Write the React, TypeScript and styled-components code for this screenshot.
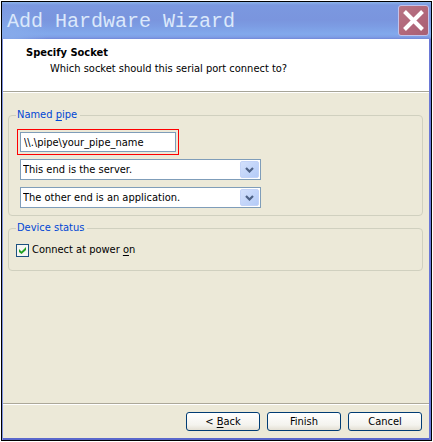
import React from "react";
import styled, { createGlobalStyle } from "styled-components";

const GlobalStyle = createGlobalStyle`
  *, *::before, *::after { box-sizing: border-box; }
  body { margin: 0; background: #fff; }
  body, button, input, select {
    font-family: "DejaVu Sans Condensed", "Noto Sans", sans-serif;
    font-size: 11px;
    line-height: 14px;
    color: #000;
  }
`;

const Page = styled.div`
  display: flex;
  min-height: 100vh;
  padding: 1px;
`;

const Dialog = styled.main`
  flex: 1;
  display: flex;
  flex-direction: column;
  background: #ece9d8;
  border: 1px solid #000;
  box-shadow: inset 1px 0 #7f93e0, inset -2px 0 #6a78d6, inset 0 -2px #5a68cc;
  padding: 0 2px 2px 1px;
`;

const TitleBar = styled.header`
  display: flex;
  align-items: center;
  justify-content: space-between;
  height: 37px;
  padding: 0 2px 0 5px;
  margin: 0 -2px 0 -1px;
  background:
    radial-gradient(ellipse 36px 30px at 10px 32px, #86aaea 0%, transparent 100%),
    linear-gradient(#8cb4ea 0, #7b98e0 3px, #7a95de 18px, #7c9ce3 24px, #82a9ec 32px, #7f9fe6 35px, #7288d8 37px);
`;

const Title = styled.h1`
  margin: 0;
  padding-top: 2px;
  font: 20px/28px "Liberation Mono", monospace;
  color: #dbe8fb;
  white-space: pre;
`;

const CloseButton = styled.button`
  display: grid;
  place-items: center;
  width: 31px;
  height: 31px;
  padding: 0;
  border: 1px solid #c3c2ea;
  border-radius: 3px;
  background: linear-gradient(135deg, #b87584, #b1667a 60%, #a65f74);
`;

const Banner = styled.section`
  height: 54px;
  padding: 6px 23px 0;
  background: #fff;
  border-bottom: 1px solid #fff;
  box-shadow: inset 0 -1px #a6a498;
`;

const Heading = styled.h2`
  margin: 0;
  font-size: 11px;
  line-height: 16px;
`;

const Subheading = styled.p`
  margin: 0 0 0 24px;
  line-height: 16px;
`;

const Content = styled.div`
  flex: 1;
  display: flex;
  flex-direction: column;
  gap: 5px;
  padding: 15px 6px 15px 5px;
`;

const Group = styled.fieldset`
  display: flex;
  flex-direction: column;
  align-items: flex-start;
  min-width: 0;
  margin: 0;
  padding: 8px 7px 7px;
  border: 1px solid #d0d0bf;
  border-radius: 4px;
`;

const Legend = styled.legend`
  padding: 0 3px 0 1px;
  color: #0046d5;
`;

const Key = styled.span`
  text-decoration: underline;
  text-underline-offset: 2px;
`;

const Fields = styled.div`
  display: flex;
  flex-direction: column;
  align-items: flex-start;
  gap: 7px;
  padding: 2px 0 0 4px;
`;

const PipeInput = styled.input`
  width: 156px;
  height: 20px;
  padding: 0 3px;
  border: 1px solid #7f9db9;
  border-radius: 0;
  background: #fff;
  outline: 1px solid #f00;
  outline-offset: 2px;
`;

const SelectBox = styled.div`
  position: relative;
  width: 241px;
  max-width: 100%;
`;

const Select = styled.select`
  display: block;
  appearance: none;
  width: 100%;
  height: 21px;
  padding: 0 22px 0 2px;
  border: 1px solid #7f9db9;
  border-radius: 0;
  background: #fff;
`;

const Arrow = styled.span`
  position: absolute;
  top: 2px;
  right: 2px;
  display: grid;
  place-items: center;
  width: 19px;
  height: 17px;
  border-radius: 2px;
  border: 1px solid #c3d3f8;
  background: linear-gradient(135deg, #d3e0fc, #b4cbf7);
  pointer-events: none;
`;

const CheckLabel = styled.label`
  display: flex;
  align-items: center;
  gap: 3px;
  padding: 0 0 6px;
`;

const Checkbox = styled.input`
  appearance: none;
  width: 13px;
  height: 13px;
  margin: 0;
  border: 1px solid #1c5180;
  background: #f6f6f2;
`;

const CheckStack = styled.span`
  display: grid;
  place-items: center;
  & > * { grid-area: 1 / 1; }
  & > svg { pointer-events: none; visibility: hidden; }
  & > input:checked + svg { visibility: visible; }
`;

const Footer = styled.footer`
  display: flex;
  justify-content: flex-end;
  gap: 7px;
  padding: 8px 7px 7px;
  border-top: 1px solid #aca899;
  box-shadow: inset 0 1px #fff;
`;

const PushButton = styled.button`
  width: 74px;
  height: 19px;
  padding: 0;
  border: 1px solid #003c74;
  border-radius: 3px;
  background: linear-gradient(#fff, #f4f3ee 70%, #e4e0d4);
`;

function DropDown({ label, options }: { label: string; options: string[] }) {
  return (
    <SelectBox>
      <Select aria-label={label}>
        {options.map((option) => (
          <option key={option}>{option}</option>
        ))}
      </Select>
      <Arrow>
        <svg width="9" height="6" viewBox="0 0 9 6" aria-hidden="true">
          <path d="M1 1 L4.5 4.5 L8 1" fill="none" stroke="#4d6185" strokeWidth="2.2" />
        </svg>
      </Arrow>
    </SelectBox>
  );
}

export default function App() {
  return (
    <>
      <GlobalStyle />
      <Page>
        <Dialog>
          <TitleBar>
            <Title>Add Hardware Wizard</Title>
            <CloseButton type="button" aria-label="Close">
              <svg width="21" height="21" viewBox="0 0 21 21" aria-hidden="true">
                <path d="M1.5 1.5 L19.5 19.5 M19.5 1.5 L1.5 19.5" stroke="#fff" strokeWidth="4" />
              </svg>
            </CloseButton>
          </TitleBar>
          <Banner>
            <Heading>Specify Socket</Heading>
            <Subheading>Which socket should this serial port connect to?</Subheading>
          </Banner>
          <Content>
            <Group>
              <Legend>
                <label htmlFor="pipe">
                  Named <Key>p</Key>ipe
                </label>
              </Legend>
              <Fields>
                <PipeInput id="pipe" type="text" defaultValue={"\\\\.\\pipe\\your_pipe_name"} />
                <DropDown
                  label="This end"
                  options={["This end is the server.", "This end is the client."]}
                />
                <DropDown
                  label="Other end"
                  options={["The other end is an application.", "The other end is a virtual machine."]}
                />
              </Fields>
            </Group>
            <Group>
              <Legend>Device status</Legend>
              <CheckLabel>
                <CheckStack>
                  <Checkbox type="checkbox" defaultChecked />
                  <svg width="7" height="7" viewBox="0 0 7 7" aria-hidden="true">
                    <path d="M0 2 L2.5 4.5 L7 0 V3 L2.5 7 L0 5 Z" fill="#21a121" />
                  </svg>
                </CheckStack>
                <span>
                  Connect at power <Key>o</Key>n
                </span>
              </CheckLabel>
            </Group>
          </Content>
          <Footer>
            <PushButton type="button">
              &lt; <Key>B</Key>ack
            </PushButton>
            <PushButton type="button">Finish</PushButton>
            <PushButton type="button">Cancel</PushButton>
          </Footer>
        </Dialog>
      </Page>
    </>
  );
}
